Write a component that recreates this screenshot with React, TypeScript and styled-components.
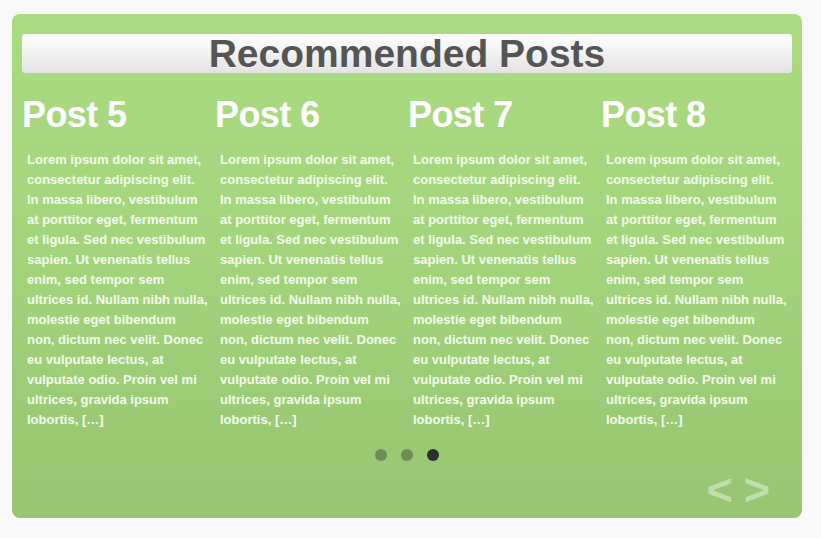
import React from 'react'
import styled, { createGlobalStyle } from 'styled-components'

const GlobalStyle = createGlobalStyle`
  html, body {
    margin: 0;
    padding: 0;
    background: #f9f9f9;
  }
  body {
    font-family: 'Liberation Sans', Arial, Helvetica, sans-serif;
  }
`

// excerpt lines, broken where the theme breaks them
const excerptLines = [
  'Lorem ipsum dolor sit amet,',
  'consectetur adipiscing elit.',
  'In massa libero, vestibulum',
  'at porttitor eget, fermentum',
  'et ligula. Sed nec vestibulum',
  'sapien. Ut venenatis tellus',
  'enim, sed tempor sem',
  'ultrices id. Nullam nibh nulla,',
  'molestie eget bibendum',
  'non, dictum nec velit. Donec',
  'eu vulputate lectus, at',
  'vulputate odio. Proin vel mi',
  'ultrices, gravida ipsum',
  'lobortis, […]',
]

const posts = [
  { id: 5, title: 'Post 5', excerpt: excerptLines },
  { id: 6, title: 'Post 6', excerpt: excerptLines },
  { id: 7, title: 'Post 7', excerpt: excerptLines },
  { id: 8, title: 'Post 8', excerpt: excerptLines },
]

const App = () => {
  const activePage = 2
  return (
    <>
      <GlobalStyle />
      <Page>
        <Widget>
          <TitleBar>
            <Title>Recommended Posts</Title>
          </TitleBar>
          <PostRow>
            {posts.map((post) => (
              <PostItem key={post.id}>
                <PostTitle>{post.title}</PostTitle>
                <Excerpt>
                  {post.excerpt.map((line, i) => (
                    <Line key={i}>{line}</Line>
                  ))}
                </Excerpt>
              </PostItem>
            ))}
          </PostRow>
          <Pager>
            {[0, 1, 2].map((i) => (
              <Dot key={i} active={i === activePage} />
            ))}
          </Pager>
          <Nav>
            <NavArrow>&lt;</NavArrow>
            <NavArrow>&gt;</NavArrow>
          </Nav>
        </Widget>
      </Page>
    </>
  )
}

export default App

const Page = styled.div`
  padding: 14px 19px 20px 12px;
`

const Widget = styled.div`
  width: 790px;
  height: 504px;
  box-sizing: border-box;
  padding: 20px 10px 0 10px;
  border-radius: 8px;
  background: linear-gradient(to bottom, #a9db81 0%, #a5d67d 40%, #97c571 100%);
  display: flex;
  flex-direction: column;
`

const TitleBar = styled.div`
  height: 39px;
  border-radius: 3px;
  background: linear-gradient(to bottom, #fefefe 0%, #f3f3f3 45%, #e3e3e3 100%);
  text-align: center;
`

const Title = styled.h2`
  margin: 0;
  font-size: 39px;
  line-height: 40px;
  font-weight: bold;
  color: #555555;
  text-shadow: 0 1px 0 rgba(255, 255, 255, 0.6);
`

const PostRow = styled.div`
  display: grid;
  grid-template-columns: repeat(4, 193px);
  margin-top: 24px;
`

const PostItem = styled.div`
  display: flex;
  flex-direction: column;
`

const PostTitle = styled.h3`
  margin: 0;
  font-size: 36px;
  line-height: 36px;
  font-weight: bold;
  letter-spacing: -0.6px;
  color: #ffffff;
`

const Excerpt = styled.p`
  margin: 17px 0 0 0;
  padding-left: 5px;
  font-size: 13px;
  line-height: 20px;
  font-weight: bold;
  color: #f4faee;
`

const Line = styled.span`
  display: block;
  white-space: nowrap;
`

const Pager = styled.div`
  display: flex;
  justify-content: center;
  gap: 14px;
  margin-top: 19px;
`

const Dot = styled.span<{ active?: boolean }>`
  width: 12px;
  height: 12px;
  border-radius: 50%;
  background: ${(p) => (p.active ? '#2f2f2f' : '#6f8c56')};
`

const Nav = styled.div`
  display: flex;
  justify-content: flex-end;
  gap: 11px;
  padding-right: 22px;
  margin-top: 6px;
`

const NavArrow = styled.span`
  font-size: 45px;
  line-height: 46px;
  font-weight: bold;
  color: rgba(255, 255, 255, 0.42);
  cursor: pointer;
`
